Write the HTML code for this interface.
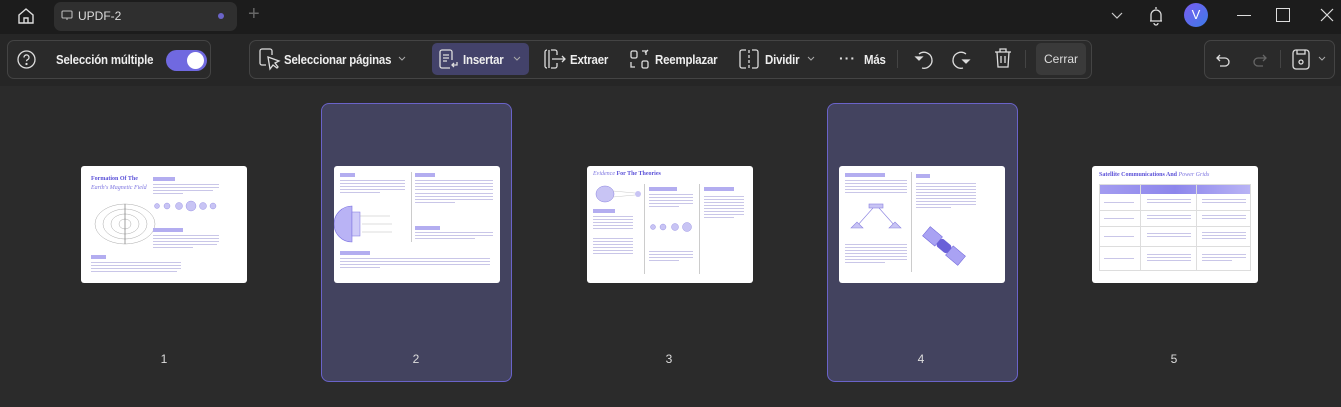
<!DOCTYPE html>
<html><head><meta charset="utf-8"><style>
*{box-sizing:border-box;margin:0;padding:0}
body{width:1341px;height:407px;background:#2b2b2b;font-family:"Liberation Sans",sans-serif;position:relative;overflow:hidden;color:#eee}
.top{position:absolute;left:0;top:0;width:1341px;height:34px;background:#1c1c1c}
.tb{position:absolute;left:0;top:34px;width:1341px;height:52px;background:#262626}
.box{position:absolute;top:40px;height:39px;border:1px solid #444;border-radius:7px;background:#2a2a2a}
.t{position:absolute;font-size:13px;font-weight:bold;color:#eee;top:52px;letter-spacing:-0.2px;transform:scaleX(0.88);transform-origin:left;white-space:nowrap}
svg{position:absolute;overflow:visible}
.card{position:absolute;top:103px;width:191px;height:279px;border:1px solid #6a63c9;border-radius:8px;background:#43435f}
.pg{position:absolute;top:166px;width:166px;height:117px;background:#fff;border-radius:3px;overflow:hidden}
.num{position:absolute;top:352px;font-size:12px;color:#ddd;width:20px;text-align:center}
.ln{position:absolute;height:1px;background:#c9c6e8}
.hd{position:absolute;height:4px;background:#b3adf0}
.ttl{position:absolute;font-family:"Liberation Serif",serif;font-weight:bold;color:#5b51d8;font-size:6px;white-space:nowrap}
</style></head><body>
<div class="top"></div>
<svg style="left:16px;top:6px" width="20" height="20" viewBox="0 0 20 20" fill="none" stroke="#ddd" stroke-width="1.4"><path d="M3 9 L10 3 L17 9 V17 H3 Z M8 17 V12 H12 V17"/></svg>
<div style="position:absolute;left:54px;top:2px;width:183px;height:29px;background:#2f2f2f;border-radius:7px"></div>
<svg style="left:61px;top:10px" width="12" height="11" viewBox="0 0 12 11" fill="none" stroke="#bbb" stroke-width="1.1"><rect x="1" y="1" width="10" height="7" rx="1"/><path d="M6 8v2"/></svg>
<div style="position:absolute;left:78px;top:9px;font-size:12px;color:#ddd">UPDF-2</div>
<div style="position:absolute;left:218px;top:13px;width:6px;height:6px;border-radius:3px;background:#6b64c8"></div>
<div style="position:absolute;left:248px;top:3px;font-size:20px;color:#666;font-weight:300">+</div>
<svg style="left:1111px;top:12px" width="12" height="8" fill="none" stroke="#ccc" stroke-width="1.2"><path d="M1 1l5 5 5-5"/></svg>
<svg style="left:1148px;top:6px" width="16" height="20" fill="none" stroke="#ddd" stroke-width="1.3"><path d="M8 1v2M3 15V9a5 5 0 0 1 10 0v6H2h12M6 17a2 2 0 0 0 4 0"/></svg>
<div style="position:absolute;left:1184px;top:3px;width:24px;height:24px;border-radius:12px;background:linear-gradient(135deg,#7a5cf0,#3c7be8);color:#fff;font-size:13px;text-align:center;line-height:24px">V</div>
<div style="position:absolute;left:1237px;top:15px;width:14px;height:1.3px;background:#ddd"></div>
<div style="position:absolute;left:1276px;top:8px;width:14px;height:14px;border:1.3px solid #ddd"></div>
<svg style="left:1320px;top:8px" width="14" height="14" stroke="#ddd" stroke-width="1.2"><path d="M1 1l12 12M13 1L1 13"/></svg>

<div class="tb"></div>
<div class="box" style="left:7px;width:204px"></div>
<svg style="left:17px;top:50px" width="19" height="19" fill="none" stroke="#ddd" stroke-width="1.3"><circle cx="9.5" cy="9.5" r="8.5"/><path d="M7 7.5a2.5 2.5 0 1 1 3.5 2.2c-.7.4-1 .8-1 1.6"/><circle cx="9.5" cy="14" r=".5" fill="#ddd"/></svg>
<div class="t" style="left:56px">Selección múltiple</div>
<div style="position:absolute;left:166px;top:50px;width:41px;height:21px;border-radius:11px;background:#7069e0"></div>
<div style="position:absolute;left:187px;top:52px;width:17px;height:17px;border-radius:9px;background:#fff"></div>

<div class="box" style="left:249px;width:843px"></div>
<svg style="left:258px;top:47px" width="22" height="24" fill="none" stroke="#ddd" stroke-width="1.3"><path d="M8 18H4a2 2 0 0 1-2-2V4a2 2 0 0 1 2-2h8a2 2 0 0 1 2 2v4"/><path d="M10 10l2 12 3-4 4 3 1-1-3-4 4-2z"/></svg>
<div class="t" style="left:284px">Seleccionar páginas</div>
<svg style="left:398px;top:56px" width="8" height="5" fill="none" stroke="#aaa"><path d="M1 1l3 3 3-3"/></svg>
<div style="position:absolute;left:432px;top:43px;width:97px;height:32px;border-radius:5px;background:#43426a"></div>
<svg style="left:438px;top:49px" width="20" height="21" fill="none" stroke="#ddd" stroke-width="1.3"><path d="M12 19H4a2 2 0 0 1-2-2V3a2 2 0 0 1 2-2h8a2 2 0 0 1 2 2v8M5 6h6M5 9h6M5 12h4M19 13v3h-5m2-2l-2 2 2 2"/></svg>
<div class="t" style="left:463px">Insertar</div>
<svg style="left:513px;top:56px" width="8" height="5" fill="none" stroke="#aaa"><path d="M1 1l3 3 3-3"/></svg>
<svg style="left:543px;top:49px" width="24" height="20" fill="none" stroke="#ddd" stroke-width="1.3"><path d="M4 1a2 2 0 0 0-2 2v14a2 2 0 0 0 2 2M8 1h4a2 2 0 0 1 2 2v3M14 14v3a2 2 0 0 1-2 2H8M9 10h13m-3-3l3 3-3 3M6 1v18"/></svg>
<div class="t" style="left:570px">Extraer</div>
<svg style="left:629px;top:49px" width="22" height="21" fill="none" stroke="#ddd" stroke-width="1.3"><rect x="2" y="2" width="6" height="7" rx="1.5"/><rect x="13" y="12" width="6" height="7" rx="1.5"/><path d="M13 2h4v4M2 13v5h4M19 1l-3 3"/></svg>
<div class="t" style="left:655px">Reemplazar</div>
<svg style="left:738px;top:49px" width="22" height="21" fill="none" stroke="#ddd" stroke-width="1.3"><path d="M8 1H4a2 2 0 0 0-2 2v14a2 2 0 0 0 2 2h4M14 1h4a2 2 0 0 1 2 2v14a2 2 0 0 1-2 2h-4"/><path d="M11 1v19" stroke-dasharray="3 2"/></svg>
<div class="t" style="left:765px">Dividir</div>
<svg style="left:807px;top:56px" width="8" height="5" fill="none" stroke="#aaa"><path d="M1 1l3 3 3-3"/></svg>
<div style="position:absolute;left:839px;top:50px;font-size:14px;color:#ddd;font-weight:bold;letter-spacing:1px">···</div>
<div class="t" style="left:864px">Más</div>
<div style="position:absolute;left:897px;top:50px;width:1px;height:18px;background:#444"></div>
<svg style="left:912px;top:48px" width="22" height="22" fill="none" stroke="#ddd" stroke-width="1.3"><path d="M7 6a8 8 0 1 1 3 14"/><path d="M4 9l3 3 3-3z" fill="#ddd"/></svg>
<svg style="left:951px;top:48px" width="22" height="22" fill="none" stroke="#ddd" stroke-width="1.3"><path d="M15 6a8 8 0 1 0-3 14"/><path d="M12 12l3 3 3-3z" fill="#ddd"/></svg>
<svg style="left:993px;top:47px" width="20" height="22" fill="none" stroke="#ddd" stroke-width="1.3"><path d="M2 5h16M7 5V2h6v3M4 5l1 15h10l1-15M8 9v7M12 9v7"/></svg>
<div style="position:absolute;left:1025px;top:50px;width:1px;height:18px;background:#444"></div>
<div style="position:absolute;left:1036px;top:43px;width:50px;height:32px;border-radius:5px;background:#3a3a3a;font-size:12px;color:#ddd;text-align:center;line-height:32px">Cerrar</div>

<div class="box" style="left:1204px;width:131px"></div>
<svg style="left:1216px;top:52px" width="14" height="14" fill="none" stroke="#ddd" stroke-width="1.3"><path d="M4 3l-3 3 3 3M1 6h8a4 4 0 0 1 0 8H4"/></svg>
<svg style="left:1253px;top:52px" width="14" height="14" fill="none" stroke="#666" stroke-width="1.3"><path d="M10 3l3 3-3 3M13 6H5a4 4 0 0 0 0 8h5"/></svg>
<div style="position:absolute;left:1280px;top:50px;width:1px;height:18px;background:#444"></div>
<svg style="left:1292px;top:48px" width="18" height="22" fill="none" stroke="#ddd" stroke-width="1.3"><rect x="1" y="2" width="16" height="19" rx="3"/><path d="M5 2v4h8V2"/><circle cx="9" cy="14" r="2"/></svg>
<svg style="left:1318px;top:56px" width="8" height="5" fill="none" stroke="#aaa"><path d="M1 1l3 3 3-3"/></svg>

<div class="card" style="left:321px"></div>
<div class="card" style="left:827px"></div>

<!-- page 1 -->
<div class="pg" style="left:81px">
<div class="ttl" style="left:10px;top:10px">Formation Of The</div>
<div class="ttl" style="left:10px;top:19px;font-weight:normal;font-style:italic;color:#7c74e0">Earth's Magnetic Field</div>
<svg style="left:10px;top:32px" width="68" height="52" fill="none" stroke="#aaa" stroke-width=".5"><ellipse cx="34" cy="26" rx="30" ry="20"/><ellipse cx="34" cy="26" rx="22" ry="15"/><ellipse cx="34" cy="26" rx="14" ry="10"/><ellipse cx="34" cy="26" rx="6" ry="5"/><path d="M34 6v40" stroke="#444"/></svg>
<div class="hd" style="left:72px;top:11px;width:22px"></div>
<div class="ln" style="left:72px;top:18px;width:66px"></div><div class="ln" style="left:72px;top:21px;width:66px"></div><div class="ln" style="left:72px;top:24px;width:60px"></div><div class="ln" style="left:72px;top:27px;width:30px"></div>
<svg style="left:72px;top:32px" width="70" height="20"><g fill="#c8c4f4" stroke="#8a82e0" stroke-width=".4"><circle cx="4" cy="8" r="2.5"/><circle cx="14" cy="8" r="3"/><circle cx="26" cy="8" r="3.5"/><circle cx="38" cy="8" r="5"/><circle cx="50" cy="8" r="3.5"/><circle cx="60" cy="8" r="3"/></g></svg>
<div class="hd" style="left:72px;top:62px;width:30px"></div>
<div class="ln" style="left:72px;top:69px;width:66px"></div><div class="ln" style="left:72px;top:72px;width:66px"></div><div class="ln" style="left:72px;top:75px;width:66px"></div><div class="ln" style="left:72px;top:78px;width:64px"></div><div class="ln" style="left:72px;top:81px;width:40px"></div>
<div class="hd" style="left:10px;top:89px;width:15px"></div>
<div class="ln" style="left:10px;top:96px;width:90px"></div><div class="ln" style="left:10px;top:99px;width:90px"></div><div class="ln" style="left:10px;top:102px;width:90px"></div><div class="ln" style="left:10px;top:105px;width:86px"></div>
</div>
<!-- page 2 -->
<div class="pg" style="left:334px">
<div class="hd" style="left:6px;top:7px;width:15px"></div>
<div class="ln" style="left:6px;top:14px;width:65px"></div><div class="ln" style="left:6px;top:17px;width:65px"></div><div class="ln" style="left:6px;top:20px;width:65px"></div><div class="ln" style="left:6px;top:23px;width:65px"></div><div class="ln" style="left:6px;top:26px;width:40px"></div>
<svg style="left:6px;top:38px" width="60" height="40"><path d="M12 2a18 18 0 0 0 0 36z" fill="#b9b3f5" stroke="#7a70e0" stroke-width=".6"/><rect x="12" y="8" width="8" height="24" fill="#d0ccf8" stroke="#7a70e0" stroke-width=".5"/><g stroke="#aaa" stroke-width=".4"><path d="M20 12h30M22 20h30M22 28h30"/></g></svg>
<div style="position:absolute;left:77px;top:6px;width:1px;height:70px;background:#ccc"></div>
<div class="hd" style="left:81px;top:7px;width:20px"></div>
<div class="ln" style="left:81px;top:14px;width:78px"></div><div class="ln" style="left:81px;top:17px;width:78px"></div><div class="ln" style="left:81px;top:20px;width:78px"></div><div class="ln" style="left:81px;top:23px;width:78px"></div><div class="ln" style="left:81px;top:27px;width:78px"></div><div class="ln" style="left:81px;top:30px;width:78px"></div><div class="ln" style="left:81px;top:33px;width:78px"></div><div class="ln" style="left:81px;top:36px;width:40px"></div>
<div class="hd" style="left:81px;top:60px;width:25px"></div>
<div class="ln" style="left:81px;top:66px;width:78px"></div><div class="ln" style="left:81px;top:69px;width:78px"></div><div class="ln" style="left:81px;top:72px;width:60px"></div>
<div class="hd" style="left:6px;top:85px;width:30px"></div>
<div class="ln" style="left:6px;top:92px;width:150px"></div><div class="ln" style="left:6px;top:95px;width:150px"></div><div class="ln" style="left:6px;top:98px;width:150px"></div><div class="ln" style="left:6px;top:101px;width:40px"></div>
</div>
<!-- page 3 -->
<div class="pg" style="left:587px">
<div class="ttl" style="left:6px;top:5px;font-size:6px"><i style="font-weight:normal;color:#7c74e0">Evidence</i> For The Theories</div>
<svg style="left:6px;top:18px" width="50" height="20"><ellipse cx="12" cy="10" rx="9" ry="8" fill="#c8c4f4" stroke="#8a82e0" stroke-width=".5"/><circle cx="45" cy="10" r="3" fill="#c8c4f4"/><path d="M20 7l22 2M20 13l22-2" stroke="#bbb" stroke-width=".4"/></svg>
<div class="hd" style="left:6px;top:43px;width:22px"></div>
<div class="ln" style="left:6px;top:50px;width:40px"></div><div class="ln" style="left:6px;top:53px;width:40px"></div><div class="ln" style="left:6px;top:56px;width:40px"></div><div class="ln" style="left:6px;top:59px;width:40px"></div><div class="ln" style="left:6px;top:62px;width:40px"></div><div class="ln" style="left:6px;top:72px;width:40px"></div><div class="ln" style="left:6px;top:75px;width:40px"></div><div class="ln" style="left:6px;top:78px;width:40px"></div><div class="ln" style="left:6px;top:81px;width:40px"></div><div class="ln" style="left:6px;top:84px;width:40px"></div><div class="ln" style="left:6px;top:87px;width:40px"></div>
<div style="position:absolute;left:57px;top:18px;width:1px;height:90px;background:#ccc"></div>
<div style="position:absolute;left:112px;top:18px;width:1px;height:90px;background:#ccc"></div>
<div class="hd" style="left:62px;top:21px;width:28px"></div>
<div class="ln" style="left:62px;top:28px;width:44px"></div><div class="ln" style="left:62px;top:31px;width:44px"></div><div class="ln" style="left:62px;top:34px;width:44px"></div><div class="ln" style="left:62px;top:37px;width:44px"></div><div class="ln" style="left:62px;top:40px;width:30px"></div>
<svg style="left:62px;top:54px" width="44" height="14"><g fill="#c8c4f4" stroke="#8a82e0" stroke-width=".4"><circle cx="4" cy="7" r="2.5"/><circle cx="14" cy="7" r="3"/><circle cx="26" cy="7" r="3.5"/><circle cx="38" cy="7" r="4.5"/></g></svg>
<div class="ln" style="left:62px;top:85px;width:44px"></div><div class="ln" style="left:62px;top:88px;width:44px"></div><div class="ln" style="left:62px;top:91px;width:44px"></div><div class="ln" style="left:62px;top:94px;width:30px"></div>
<div class="hd" style="left:117px;top:21px;width:30px"></div>
<div class="ln" style="left:117px;top:30px;width:40px"></div><div class="ln" style="left:117px;top:33px;width:40px"></div><div class="ln" style="left:117px;top:36px;width:40px"></div><div class="ln" style="left:117px;top:39px;width:40px"></div><div class="ln" style="left:117px;top:42px;width:40px"></div><div class="ln" style="left:117px;top:45px;width:40px"></div><div class="ln" style="left:117px;top:48px;width:40px"></div><div class="ln" style="left:117px;top:51px;width:30px"></div>
</div>
<!-- page 4 -->
<div class="pg" style="left:839px">
<div class="hd" style="left:6px;top:7px;width:40px"></div>
<div class="ln" style="left:6px;top:14px;width:62px"></div><div class="ln" style="left:6px;top:17px;width:62px"></div><div class="ln" style="left:6px;top:20px;width:62px"></div><div class="ln" style="left:6px;top:23px;width:62px"></div><div class="ln" style="left:6px;top:26px;width:62px"></div>
<svg style="left:6px;top:36px" width="62" height="36" fill="none" stroke="#8a82e0" stroke-width=".6"><rect x="24" y="2" width="14" height="4" fill="#c8c4f4"/><path d="M28 6L12 24M34 6l16 18"/><path d="M6 26l6-6 6 6z M44 26l6-6 6 6z" fill="#c8c4f4"/></svg>
<div class="ln" style="left:6px;top:78px;width:62px"></div><div class="ln" style="left:6px;top:81px;width:62px"></div><div class="ln" style="left:6px;top:84px;width:62px"></div><div class="ln" style="left:6px;top:87px;width:62px"></div><div class="ln" style="left:6px;top:90px;width:62px"></div><div class="ln" style="left:6px;top:93px;width:62px"></div><div class="ln" style="left:6px;top:96px;width:40px"></div>
<div style="position:absolute;left:72px;top:6px;width:1px;height:100px;background:#ccc"></div>
<div class="hd" style="left:77px;top:8px;width:14px"></div>
<div class="ln" style="left:77px;top:17px;width:60px"></div><div class="ln" style="left:77px;top:20px;width:60px"></div><div class="ln" style="left:77px;top:23px;width:60px"></div><div class="ln" style="left:77px;top:26px;width:60px"></div><div class="ln" style="left:77px;top:29px;width:60px"></div><div class="ln" style="left:77px;top:32px;width:60px"></div><div class="ln" style="left:77px;top:35px;width:60px"></div><div class="ln" style="left:77px;top:38px;width:60px"></div><div class="ln" style="left:77px;top:41px;width:35px"></div>
<svg style="left:80px;top:60px" width="50" height="40"><g transform="rotate(40 25 20)"><rect x="2" y="14" width="16" height="12" fill="#a9a2f3" stroke="#6a60d8" stroke-width=".5"/><rect x="32" y="14" width="16" height="12" fill="#a9a2f3" stroke="#6a60d8" stroke-width=".5"/><rect x="18" y="15" width="14" height="10" rx="3" fill="#6a60d8"/></g></svg>
</div>
<!-- page 5 -->
<div class="pg" style="left:1092px">
<div class="ttl" style="left:7px;top:6px;font-size:6px">Satellite Communications And <i style="font-weight:normal;color:#7c74e0">Power Grids</i></div>
<div style="position:absolute;left:7px;top:18px;width:152px;height:10px;background:linear-gradient(90deg,#a39cf0,#8d86ec 50%,#b9b4f5)"></div>
<div style="position:absolute;left:7px;top:18px;width:152px;height:87px;border:1px solid #ddd"></div>
<div style="position:absolute;left:48px;top:18px;width:1px;height:87px;background:#ddd"></div>
<div style="position:absolute;left:104px;top:18px;width:1px;height:87px;background:#ddd"></div>
<div style="position:absolute;left:7px;top:44px;width:152px;height:1px;background:#ddd"></div>
<div style="position:absolute;left:7px;top:60px;width:152px;height:1px;background:#ddd"></div>
<div style="position:absolute;left:7px;top:80px;width:152px;height:1px;background:#ddd"></div>
<div class="ln" style="left:12px;top:36px;width:30px"></div><div class="ln" style="left:55px;top:33px;width:44px"></div><div class="ln" style="left:55px;top:36px;width:44px"></div><div class="ln" style="left:110px;top:33px;width:44px"></div><div class="ln" style="left:110px;top:36px;width:44px"></div>
<div class="ln" style="left:12px;top:52px;width:30px"></div><div class="ln" style="left:55px;top:49px;width:44px"></div><div class="ln" style="left:55px;top:52px;width:44px"></div><div class="ln" style="left:110px;top:49px;width:44px"></div><div class="ln" style="left:110px;top:52px;width:44px"></div>
<div class="ln" style="left:12px;top:70px;width:30px"></div><div class="ln" style="left:55px;top:67px;width:44px"></div><div class="ln" style="left:55px;top:70px;width:44px"></div><div class="ln" style="left:110px;top:66px;width:44px"></div><div class="ln" style="left:110px;top:69px;width:44px"></div><div class="ln" style="left:110px;top:72px;width:44px"></div>
<div class="ln" style="left:12px;top:92px;width:30px"></div><div class="ln" style="left:55px;top:88px;width:44px"></div><div class="ln" style="left:55px;top:91px;width:44px"></div><div class="ln" style="left:55px;top:94px;width:44px"></div><div class="ln" style="left:110px;top:88px;width:44px"></div><div class="ln" style="left:110px;top:91px;width:44px"></div><div class="ln" style="left:110px;top:94px;width:30px"></div>
</div>

<div class="num" style="left:154px">1</div>
<div class="num" style="left:406px">2</div>
<div class="num" style="left:659px">3</div>
<div class="num" style="left:911px">4</div>
<div class="num" style="left:1164px">5</div>
</body></html>
